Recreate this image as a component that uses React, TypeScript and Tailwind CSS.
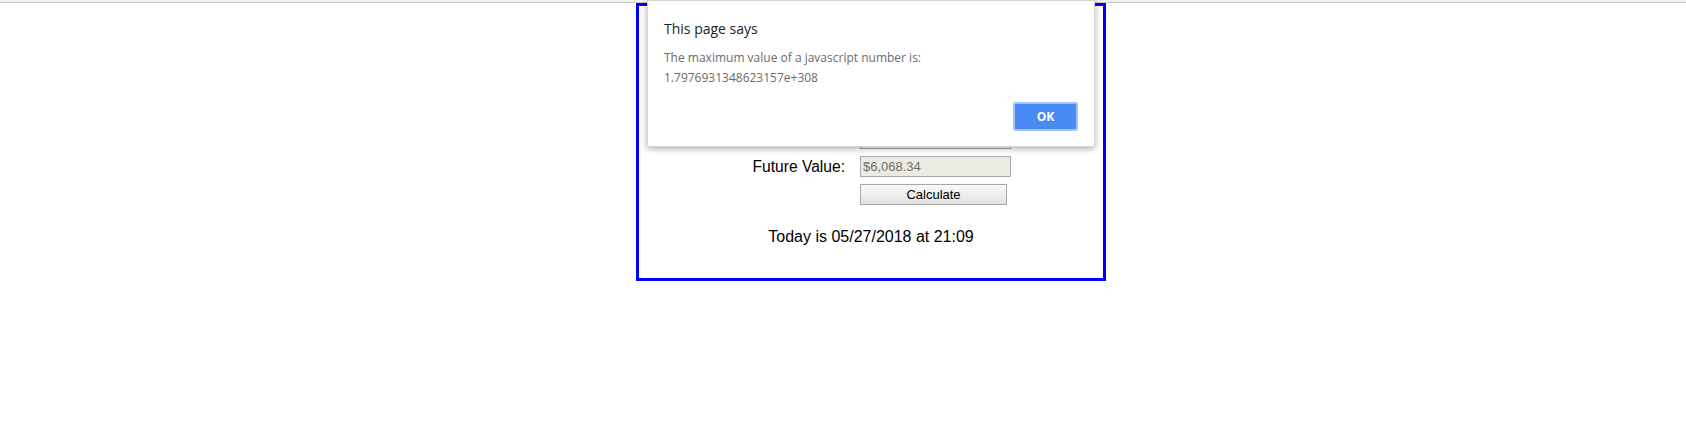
import React from 'react';

// rows sitting under the alert: only the bottom edge of the last input shows
const hiddenRows = ['investment', 'rate', 'years'];

const App: React.FC = () => {
  return (
    <div className="relative min-h-[448px] bg-white font-['Liberation_Sans',Arial,sans-serif]">
      {/* browser chrome edge */}
      <div className="h-[3px] bg-[#f1f1f1] border-b border-[#c8c8c8]" />

      {/* page */}
      <main className="ml-[636px] w-[470px] border-[3px] border-[#0000ff] pt-[14px] pb-[32px]">
        <div className="h-[28px] mb-[24px]" aria-hidden />
        <div className="flex flex-col gap-[7px]">
          {hiddenRows.map((id) => (
            <div key={id} className="flex items-center h-[21px]" aria-hidden>
              <div className="w-[206px]" />
              <div className="ml-[15px] w-[151px] h-[21px] border border-[#a9a9a9] bg-white" />
            </div>
          ))}
          <div className="flex items-center h-[21px]">
            <label className="w-[206px] text-right text-[15.6px] leading-[18px] text-black">Future Value:</label>
            <input
              disabled
              value="$6,068.34"
              className="ml-[15px] w-[151px] h-[21px] border border-[#a9a9a9] bg-[#ebebe4] px-[2px] text-[13px] text-[#6d6d6d] outline-none"
            />
          </div>
          <div className="flex items-center h-[21px]">
            <div className="w-[206px]" />
            <button className="ml-[15px] w-[147px] h-[21px] border border-[#a6a6a6] bg-gradient-to-b from-[#fafafa] to-[#e2e2e2] text-[13px] leading-[19px] text-black">
              Calculate
            </button>
          </div>
        </div>
        <p className="mt-[23px] text-center text-[16px] leading-[18px] text-black">
          Today is 05/27/2018 at 21:09
        </p>
      </main>

      {/* alert dialog */}
      <div className="absolute left-[647px] top-0 w-[448px] h-[147px] bg-white border border-[#d6d6d6] rounded-b-[2px] shadow-[0_2px_6px_rgba(0,0,0,0.3)] px-[16px] pt-[18px] font-['Open_Sans','Noto_Sans',sans-serif]">
        <div className="text-[14px] leading-[20px] text-[#222]">This page says</div>
        <div className="mt-[9px] text-[12px] leading-[20px] text-[#6b6b6b]">
          The maximum value of a javascript number is:
          <br />
          1.7976931348623157e+308
        </div>
        <div className="flex justify-end mt-[14px]">
          <button className="w-[65px] h-[29px] rounded-[3px] bg-[#4a8af4] border-2 border-[#a3c2f8] text-white text-[12px] font-bold">
            OK
          </button>
        </div>
      </div>
    </div>
  );
};

export default App;
